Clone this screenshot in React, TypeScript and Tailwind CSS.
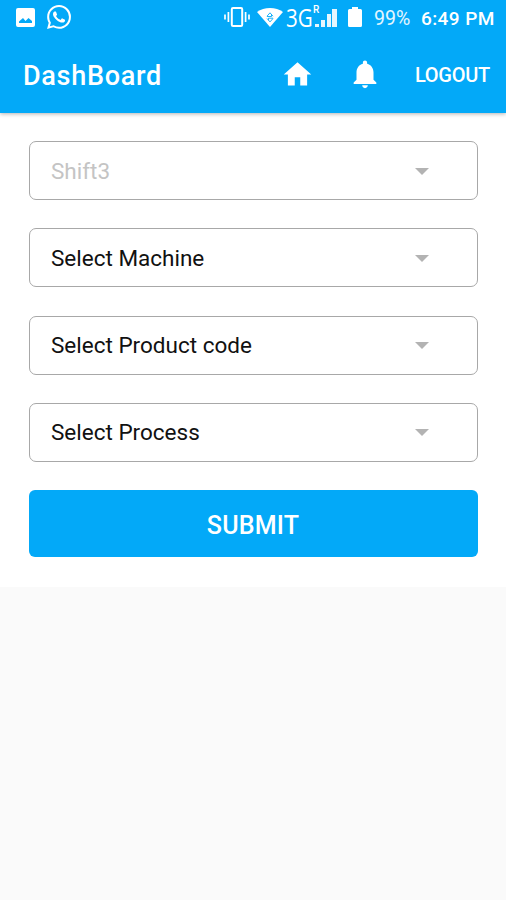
import React from "react";

const fields = [
  { label: "Shift3", disabled: true },
  { label: "Select Machine", disabled: false },
  { label: "Select Product code", disabled: false },
  { label: "Select Process", disabled: false },
];

function StatusBar() {
  return (
    <div className="flex h-[37px] items-start text-white">
      <svg className="ml-4 mt-2 h-[19px] w-[19px] shrink-0" viewBox="0 0 19 19" fill="currentColor">
        <path fillRule="evenodd" d="M2 0h15a2 2 0 0 1 2 2v15a2 2 0 0 1-2 2H2a2 2 0 0 1-2-2V2a2 2 0 0 1 2-2Zm1 15h13v-2l-3.500-3-3 3-2.500-3L3 13.500Z" />
      </svg>
      <svg className="ml-3 mt-[5px] h-6 w-6 shrink-0" viewBox="0 0 24 24" fill="currentColor">
        <path d="M17.472 14.382c-.297-.149-1.758-.867-2.030-.967-.273-.099-.471-.148-.670.150-.197.297-.767.966-.940 1.164-.173.199-.347.223-.644.075-.297-.150-1.255-.463-2.390-1.475-.883-.788-1.480-1.761-1.653-2.059-.173-.297-.018-.458.130-.606.134-.133.298-.347.446-.520.149-.174.198-.298.298-.497.099-.198.050-.371-.025-.520-.075-.149-.669-1.612-.916-2.207-.242-.579-.487-.500-.669-.510-.173-.008-.371-.010-.570-.010-.198 0-.520.074-.792.372-.272.297-1.040 1.016-1.040 2.479 0 1.462 1.065 2.875 1.213 3.074.149.198 2.096 3.200 5.077 4.487.709.306 1.262.489 1.694.625.712.227 1.360.195 1.871.118.571-.085 1.758-.719 2.006-1.413.248-.694.248-1.289.173-1.413-.074-.124-.272-.198-.570-.347m-5.421 7.403h-.004a9.870 9.870 0 0 1-5.031-1.378l-.361-.214-3.741.982.998-3.648-.235-.374a9.860 9.860 0 0 1-1.510-5.260c.001-5.450 4.436-9.884 9.888-9.884 2.640 0 5.122 1.030 6.988 2.898a9.825 9.825 0 0 1 2.893 6.994c-.003 5.450-4.437 9.884-9.885 9.884m8.413-18.297A11.815 11.815 0 0 0 12.050 0C5.495 0 .160 5.335.157 11.892c0 2.096.547 4.142 1.588 5.945L.057 24l6.305-1.654a11.882 11.882 0 0 0 5.683 1.448h.005c6.554 0 11.890-5.335 11.893-11.893a11.821 11.821 0 0 0-3.480-8.413Z" />
      </svg>
      <svg className="ml-[153px] mt-[7px] h-5 w-[26px] shrink-0" viewBox="0 0 26 20" fill="none" stroke="currentColor" strokeWidth="1.700">
        <rect x="7.800" y="1" width="10.400" height="18" rx="1.200" strokeWidth="2" />
        <path d="M4.400 5v10M1 7.500v5M21.600 5v10M25 7.500v5" />
      </svg>
      <svg className="ml-[7px] mt-2 h-[19px] w-[26px] shrink-0" viewBox="0 0 26 19">
        <path fill="currentColor" d="M0 4C7-1.300 19-1.300 26 4L13 19Z" />
        <path fill="none" stroke="#03a9f8" strokeWidth="0.900" d="M10 8.200L13 4.800l3 3.400M10 10.500l3 3.400 3-3.400M10 8.500h4.500v-2M16 10.200h-4.500v2" />
      </svg>
      <div className="ml-[3px] mt-[4.500px] w-[27px] shrink-0">
        <span className="inline-block origin-left scale-x-[0.820] whitespace-nowrap font-['Open_Sans',sans-serif] text-[25px] leading-6">3G</span>
      </div>
      <div className="ml-[2px] mt-[5px] flex h-[22px] w-[22px] shrink-0 items-end gap-[1.500px]">
        <div className="flex h-full w-[4.300px] flex-col justify-between">
          <span className="ml-[-2px] origin-top-left font-['Roboto',sans-serif] text-[10px] font-medium leading-[10px]">R</span>
          <span className="h-[3px] w-[4.300px] bg-white/90" />
        </div>
        <span className="h-[7px] w-[4.300px] bg-white/90" />
        <span className="h-[13px] w-[4.300px] bg-white/90" />
        <span className="h-[18px] w-[4.300px] bg-white/90" />
      </div>
      <svg className="ml-[11px] mt-[7px] h-5 w-[14px] shrink-0" viewBox="0 0 14 20" fill="currentColor">
        <path d="M4 0h6v2h2.500Q14 2 14 3.500v15q0 1.500-1.500 1.500h-11Q0 20 0 18.500v-15Q0 2 1.500 2H4Z" />
      </svg>
      <span className="ml-3 mt-[9px] w-[38px] shrink-0 whitespace-nowrap text-[19.500px] leading-5 text-white/90">99%</span>
      <span className="ml-[9px] mt-[9px] whitespace-nowrap text-[19px] font-medium leading-5 tracking-[0.400px]">6:49 PM</span>
    </div>
  );
}

export default function App() {
  return (
    <div className="h-[900px] w-[506px] overflow-hidden bg-[#fafafa] font-['Roboto',sans-serif]">
      <header className="relative h-[113px] bg-[#03a9f8] shadow-[0_1px_4px_rgba(0,0,0,0.3)]">
        <StatusBar />
        <div className="flex h-[76px] items-center text-white">
          <h1 className="ml-[23px] mt-[2px] w-[258px] whitespace-nowrap text-[27px] font-medium leading-8 tracking-[0.700px]">DashBoard</h1>
          <svg className="mb-[2px] h-[33px] w-[33px] shrink-0" viewBox="0 0 24 24" fill="currentColor">
            <path d="M10 20v-6h4v6h5v-8h3L12 3 2 12h3v8z" />
          </svg>
          <svg className="mb-[3px] ml-[33.500px] h-[34px] w-[34px] shrink-0" viewBox="0 0 24 24" fill="currentColor">
            <path d="M12 22c1.100 0 2-.900 2-2h-4c0 1.100.890 2 2 2zm6-6v-5c0-3.070-1.640-5.640-4.500-6.320V4c0-.830-.670-1.500-1.500-1.500s-1.500.670-1.500 1.500v.680C7.630 5.360 6 7.920 6 11v5l-2 2v1h16v-1l-2-2z" />
          </svg>
          <button className="ml-[33.500px] whitespace-nowrap text-[20px] font-medium leading-6 tracking-[-0.300px]">LOGOUT</button>
        </div>
      </header>
      <main className="h-[474px] bg-white px-[28.500px] pt-7">
        <div className="flex flex-col gap-[28.300px]">
          {fields.map((field) => (
            <button
              key={field.label}
              className="flex h-[59px] w-full items-center justify-between rounded-[7px] border-[1.500px] border-[#a8a8a8] pl-[21.500px] pr-[47.500px] text-left"
            >
              <span className={`whitespace-nowrap text-[22.500px] leading-7 ${field.disabled ? "text-[#c4c4c4]" : "text-[#111]"}`}>
                {field.label}
              </span>
              <svg className="mt-px h-[7px] w-[14px]" viewBox="0 0 14 7" fill="#b3b3b3">
                <path d="M0 0h14L7 7Z" />
              </svg>
            </button>
          ))}
        </div>
        <button className="mt-7 flex h-[67px] w-full items-center justify-center rounded-[6px] bg-[#03a9f8] pt-[5px] text-[25px] font-medium leading-8 tracking-[0.200px] text-white">
          SUBMIT
        </button>
      </main>
    </div>
  );
}
